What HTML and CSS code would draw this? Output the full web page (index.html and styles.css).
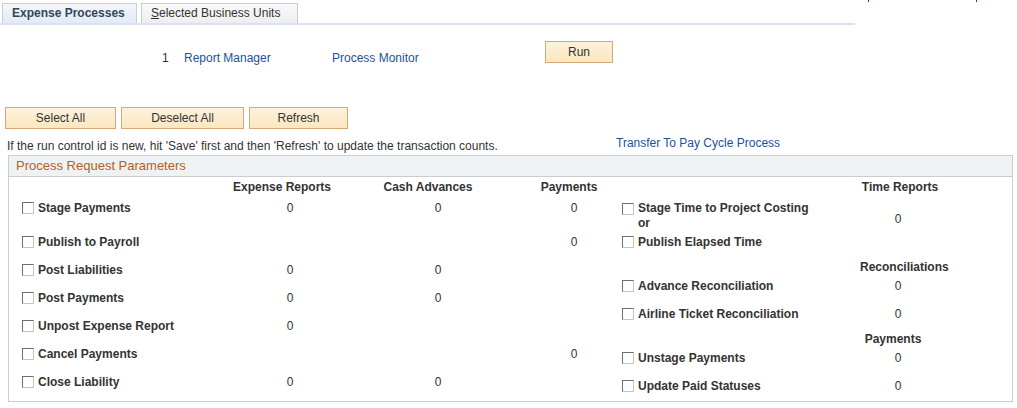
FILE: index.html
```html
<!DOCTYPE html>
<html lang="en">
<head>
    <meta charset="UTF-8">
    <meta name="viewport" content="width=device-width, initial-scale=1.0">
    <title>Expense Processes</title>
    <link rel="stylesheet" href="styles.css">
</head>
<body>
    <div class="top-marks"><span class="mark mark-a"></span><span class="mark mark-b"></span></div>

    <div class="tabs">
        <div class="tab tab-active">Expense Processes</div>
        <div class="tab tab-other"><u>S</u>elected Business Units</div>
    </div>

    <div class="run-row">
        <span class="run-num">1</span>
        <a href="#" class="link run-link rm">Report Manager</a>
        <a href="#" class="link run-link pm">Process Monitor</a>
        <button class="btn btn-run" type="button">Run</button>
    </div>

    <div class="btn-row">
        <button class="btn btn-select" type="button">Select All</button>
        <button class="btn btn-deselect" type="button">Deselect All</button>
        <button class="btn btn-refresh" type="button">Refresh</button>
    </div>

    <div class="info-row">
        <span class="info-text">If the run control id is new, hit 'Save' first and then 'Refresh' to update the transaction counts.</span>
        <a href="#" class="link">Transfer To Pay Cycle Process</a>
    </div>

    <div class="panel">
        <div class="panel-head">Process Request Parameters</div>
        <div class="panel-body">
            <div class="left-col">
                <div class="lrow col-head">
                    <span></span>
                    <span class="head">Expense Reports</span>
                    <span class="head">Cash Advances</span>
                    <span class="head">Payments</span>
                </div>
                <div class="lrow data first">
                    <label class="chk"><span class="box"></span>Stage Payments</label>
                    <span class="val v-er">0</span>
                    <span class="val v-ca">0</span>
                    <span class="val v-pay">0</span>
                </div>
                <div class="lrow data">
                    <label class="chk"><span class="box"></span>Publish to Payroll</label>
                    <span class="val v-er"></span>
                    <span class="val v-ca"></span>
                    <span class="val v-pay">0</span>
                </div>
                <div class="lrow data">
                    <label class="chk"><span class="box"></span>Post Liabilities</label>
                    <span class="val v-er">0</span>
                    <span class="val v-ca">0</span>
                    <span class="val v-pay"></span>
                </div>
                <div class="lrow data">
                    <label class="chk"><span class="box"></span>Post Payments</label>
                    <span class="val v-er">0</span>
                    <span class="val v-ca">0</span>
                    <span class="val v-pay"></span>
                </div>
                <div class="lrow data">
                    <label class="chk"><span class="box"></span>Unpost Expense Report</label>
                    <span class="val v-er">0</span>
                    <span class="val v-ca"></span>
                    <span class="val v-pay"></span>
                </div>
                <div class="lrow data">
                    <label class="chk"><span class="box"></span>Cancel Payments</label>
                    <span class="val v-er"></span>
                    <span class="val v-ca"></span>
                    <span class="val v-pay">0</span>
                </div>
                <div class="lrow data">
                    <label class="chk"><span class="box"></span>Close Liability</label>
                    <span class="val v-er">0</span>
                    <span class="val v-ca">0</span>
                    <span class="val v-pay"></span>
                </div>
            </div>

            <div class="right-col">
                <div class="rrow col-head">
                    <span></span>
                    <span class="head">Time Reports</span>
                </div>
                <div class="rrow stage">
                    <label class="chk chk-top"><span class="box"></span><span>Stage Time to Project Costing<br>or</span></label>
                    <span class="val stage-val">0</span>
                </div>
                <div class="rrow data">
                    <label class="chk"><span class="box"></span>Publish Elapsed Time</label>
                    <span class="val"></span>
                </div>
                <div class="rrow sub-head">
                    <span></span>
                    <span class="head">Reconciliations</span>
                </div>
                <div class="rrow data">
                    <label class="chk"><span class="box"></span>Advance Reconciliation</label>
                    <span class="val">0</span>
                </div>
                <div class="rrow data">
                    <label class="chk"><span class="box"></span>Airline Ticket Reconciliation</label>
                    <span class="val">0</span>
                </div>
                <div class="rrow sub-head">
                    <span></span>
                    <span class="head head-pay">Payments</span>
                </div>
                <div class="rrow data">
                    <label class="chk"><span class="box"></span>Unstage Payments</label>
                    <span class="val">0</span>
                </div>
                <div class="rrow data">
                    <label class="chk"><span class="box"></span>Update Paid Statuses</label>
                    <span class="val">0</span>
                </div>
            </div>
        </div>
    </div>
</body>
</html>
```

FILE: styles.css
```css
* {
    box-sizing: border-box;
}
body {
    margin: 0;
    font-family: "Liberation Sans", Arial, sans-serif;
    font-size: 12px;
    color: #333;
    background: #fff;
    position: relative;
}
.top-marks .mark {
    position: absolute;
    top: 0;
    width: 1px;
    height: 2px;
    background: #b01030;
}
.mark-a { left: 868px; }
.mark-b { left: 976px; }

.tabs {
    display: flex;
    gap: 4px;
    width: 855px;
    padding: 3px 0 0 2px;
    border-bottom: 2px solid #d9e4f3;
}
.tab {
    height: 20px;
    line-height: 19px;
    font-size: 12px;
    padding-left: 9px;
    white-space: nowrap;
    border: 1px solid #c5ccd4;
    border-bottom: none;
    background: linear-gradient(#fafafa, #eeeeee);
    color: #333;
}
.tab-active {
    width: 135px;
    font-weight: bold;
    color: #34465b;
    background: linear-gradient(#f3f7fc, #e2eaf5);
    border-color: #c3d0df;
}
.tab-other {
    width: 157px;
}

.link {
    color: #24509b;
    text-decoration: none;
}
.run-row {
    display: flex;
    align-items: flex-start;
    margin-top: 16px;
    padding-left: 162px;
}
.run-link, .run-num {
    padding-top: 10px;
    line-height: 14px;
}
.run-num { width: 22px; }
.rm { width: 148px; }
.pm { width: 213px; }

.btn {
    height: 22px;
    font-family: "Liberation Sans", Arial, sans-serif;
    font-size: 12px;
    color: #333;
    background: linear-gradient(#fdf2de, #fbe6bf);
    border: 1px solid #d4a877;
    padding: 0;
    cursor: pointer;
}
.btn-run { width: 68px; }

.btn-row {
    display: flex;
    gap: 5px;
    margin-top: 42px;
    padding-left: 5px;
}
.btn-select { width: 111px; }
.btn-deselect { width: 123px; }
.btn-refresh { width: 99px; }

.info-row {
    display: flex;
    align-items: flex-start;
    margin-top: 7px;
    padding-left: 7px;
    line-height: 14px;
    height: 19px;
}
.info-text {
    width: 609px;
    padding-top: 3px;
}

.panel {
    margin-left: 8px;
    width: 1005px;
    border: 1px solid #c9cdd2;
}
.panel-head {
    height: 21px;
    line-height: 20px;
    padding-left: 7px;
    font-size: 13px;
    color: #b5601e;
    background: #eff2f3;
    border-bottom: 1px solid #c9cdd2;
}
.panel-body {
    display: flex;
    padding: 0 0 1px 13px;
}

.lrow {
    display: grid;
    grid-template-columns: 211px 97px 196px 86px;
}
.rrow {
    display: grid;
    grid-template-columns: 238px 80px;
}
.right-col {
    margin-left: 10px;
}
.col-head {
    height: 17px;
    padding-top: 3px;
    line-height: 14px;
}
.head {
    font-weight: bold;
    text-align: center;
    white-space: nowrap;
}
.sub-head {
    height: 16px;
    padding-top: 4px;
    line-height: 14px;
}
.head-pay {
    padding-right: 14px;
}
.data {
    height: 28px;
    align-items: center;
    line-height: 14px;
}
.lrow.first {
    height: 34px;
    align-items: start;
    padding-top: 7px;
}
.stage {
    height: 34px;
    padding-top: 7px;
    line-height: 15px;
    align-items: start;
}
.chk {
    display: flex;
    align-items: center;
    gap: 4px;
    font-weight: bold;
    white-space: nowrap;
}
.chk-top {
    align-items: flex-start;
}
.chk-top .box {
    margin-top: 2px;
}
.box {
    width: 12px;
    height: 12px;
    flex: none;
    background: #fff;
    border: 1px solid;
    border-color: #6f6f6f #c4c4c4 #c4c4c4 #6f6f6f;
}
.val {
    text-align: center;
}
.v-er { padding-left: 17px; }
.v-ca { padding-left: 20px; }
.v-pay { padding-left: 10px; }
.stage-val {
    padding-top: 11px;
}
.rrow .val {
    padding-right: 4px;
}
```
